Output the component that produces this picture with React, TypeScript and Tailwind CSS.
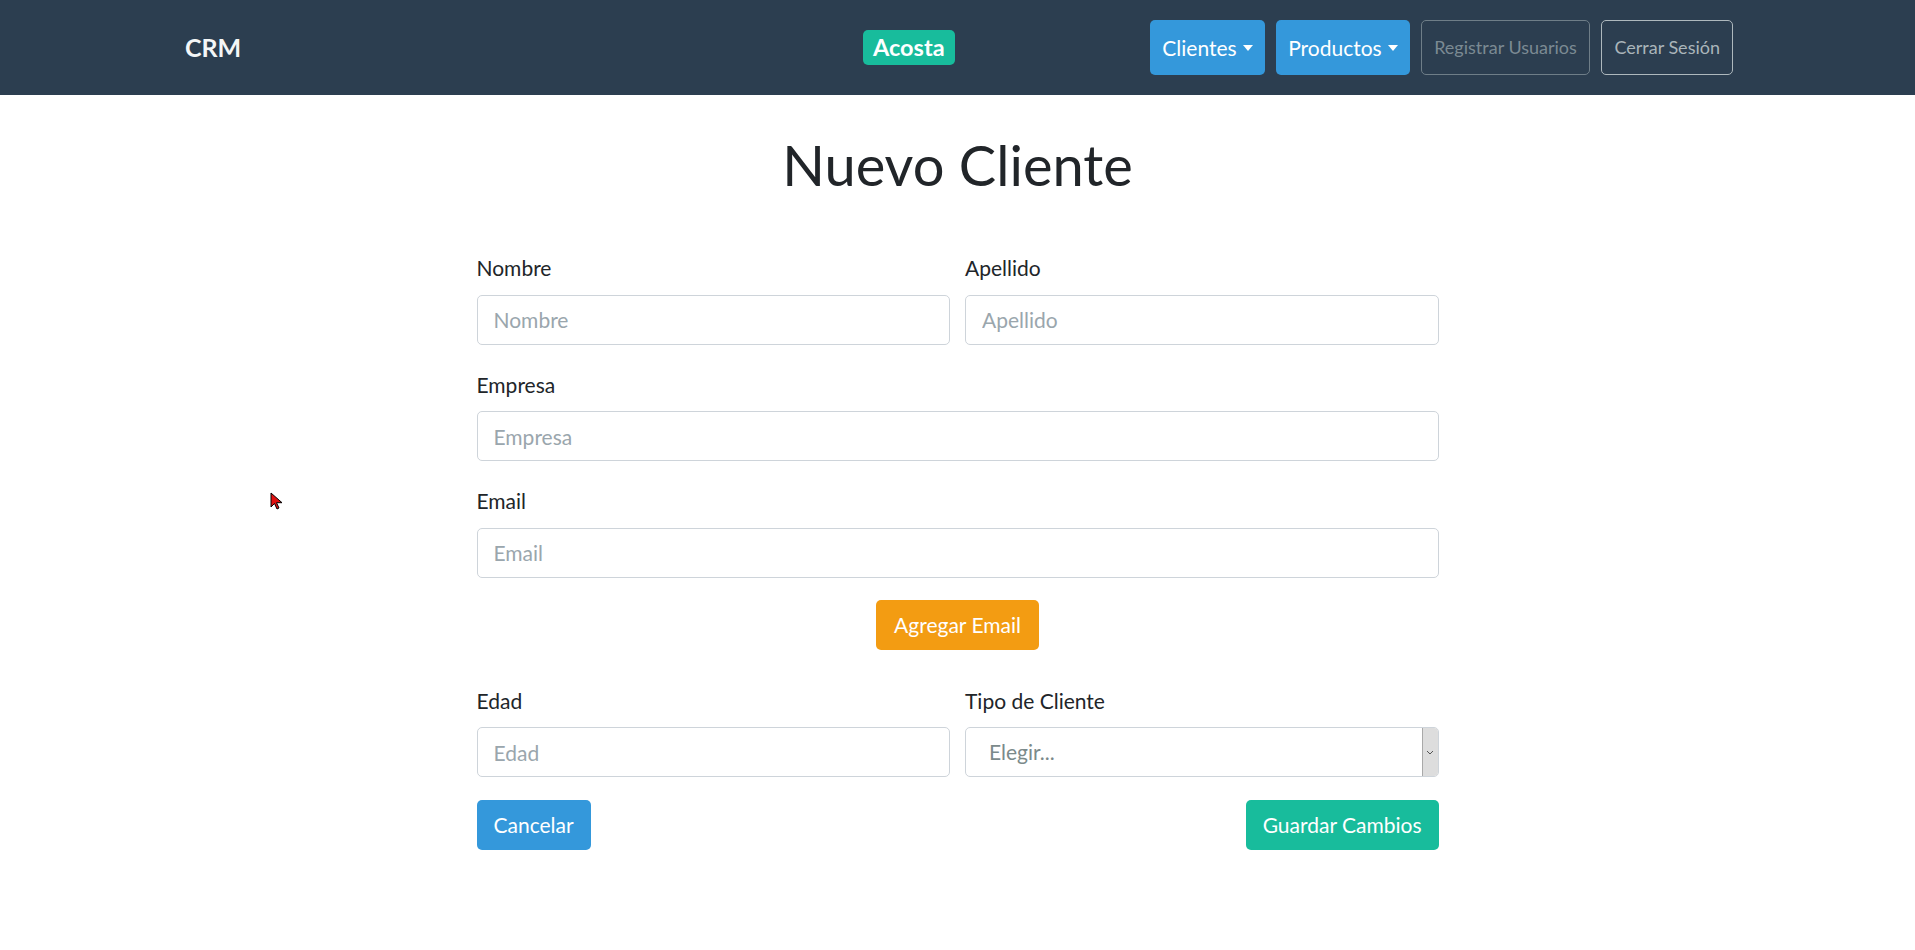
import React from 'react'

function Caret() {
  return <span className="ml-[6px] inline-block h-0 w-0 border-x-[5px] border-t-[6px] border-x-transparent border-t-white" />
}

function Field({ label, placeholder }: { label: string; placeholder: string }) {
  return (
    <div className="flex flex-col">
      <label className="mb-[11px] text-[21px] leading-[31.5px] text-[#212529]">{label}</label>
      <input
        placeholder={placeholder}
        className="h-[50px] w-full rounded-[5px] border border-[#ced4da] bg-white px-[16px] text-[21px] text-[#2c3e50] outline-none placeholder:text-[#9aa6ad]"
      />
    </div>
  )
}

export default function App() {
  return (
    <div className="min-h-screen bg-white font-['Lato',sans-serif]">
      {/* barra de navegación */}
      <nav className="flex h-[95px] items-center bg-[#2c3e50] pl-[185px] pr-[182px]">
        <div className="flex items-center">
          <a className="w-[57px] text-[25px] font-bold text-[#f4f6f7]">CRM</a>
          <span className="ml-[621px] flex h-[35px] items-center rounded-[5px] bg-[#18bc9c] px-[10px] text-[23.5px] font-bold text-white">
            Acosta
          </span>
        </div>
        <div className="ml-auto flex items-center gap-[11.5px]">
          <button className="flex h-[55px] items-center rounded-[5px] bg-[#3498db] px-[12px] text-[21px] text-white">
            Clientes
            <Caret />
          </button>
          <button className="flex h-[55px] items-center rounded-[5px] bg-[#3498db] px-[12px] text-[21px] text-white">
            Productos
            <Caret />
          </button>
          <button className="flex h-[55px] items-center rounded-[5px] border border-[#6f7e88] px-[12px] text-[18px] text-[#7b8a93]">
            Registrar Usuarios
          </button>
          <button className="flex h-[55px] items-center rounded-[5px] border border-[#aeb8bd] px-[12px] text-[18px] text-[#aab5ba]">
            Cerrar Sesión
          </button>
        </div>
      </nav>

      {/* formulario */}
      <main className="pt-[36px]">
        <h1 className="text-center text-[56px] leading-[67px] text-[#212529]">Nuevo Cliente</h1>

        <form className="mx-auto mt-[54px] w-[962px]">
          <div className="mb-[24px] grid grid-cols-2 gap-[15px]">
            <Field label="Nombre" placeholder="Nombre" />
            <Field label="Apellido" placeholder="Apellido" />
          </div>
          <div className="mb-[24px]">
            <Field label="Empresa" placeholder="Empresa" />
          </div>
          <div>
            <Field label="Email" placeholder="Email" />
          </div>

          <div className="mt-[22px] flex justify-center">
            <button type="button" className="h-[50px] rounded-[5px] bg-[#f39c12] px-[18px] text-[21px] text-white">
              Agregar Email
            </button>
          </div>

          <div className="mt-[35px] grid grid-cols-2 gap-[15px]">
            <Field label="Edad" placeholder="Edad" />
            <div className="flex flex-col">
              <label className="mb-[11px] text-[21px] leading-[31.5px] text-[#212529]">Tipo de Cliente</label>
              <div className="flex h-[50px] items-stretch overflow-hidden rounded-[5px] border border-[#ced4da] bg-white">
                <span className="flex flex-1 items-center pl-[23px] text-[21px] text-[#7b8a8b]">Elegir...</span>
                <span className="flex w-[16px] items-center justify-center border-l border-[#a9a9a9] bg-[#dddddd]">
                  <svg width="8" height="5" viewBox="0 0 8 5">
                    <path d="M1 1l3 3 3-3" fill="none" stroke="#555" strokeWidth="1" />
                  </svg>
                </span>
              </div>
            </div>
          </div>

          <div className="mt-[23px] flex justify-between">
            <button type="button" className="h-[50px] rounded-[5px] bg-[#3498db] px-[17px] text-[21px] text-white">
              Cancelar
            </button>
            <button type="button" className="h-[50px] rounded-[5px] bg-[#18bc9c] px-[17px] text-[21px] text-white">
              Guardar Cambios
            </button>
          </div>
        </form>
      </main>

      {/* puntero del ratón */}
      <svg className="absolute left-[270px] top-[492px]" width="13" height="18" viewBox="0 0 13 18">
        <path d="M1 1v14l3.5-3.5 2.5 5.5 2-1-2.5-5.3H12z" fill="#e01010" stroke="#000" strokeWidth="1" />
      </svg>
    </div>
  )
}
